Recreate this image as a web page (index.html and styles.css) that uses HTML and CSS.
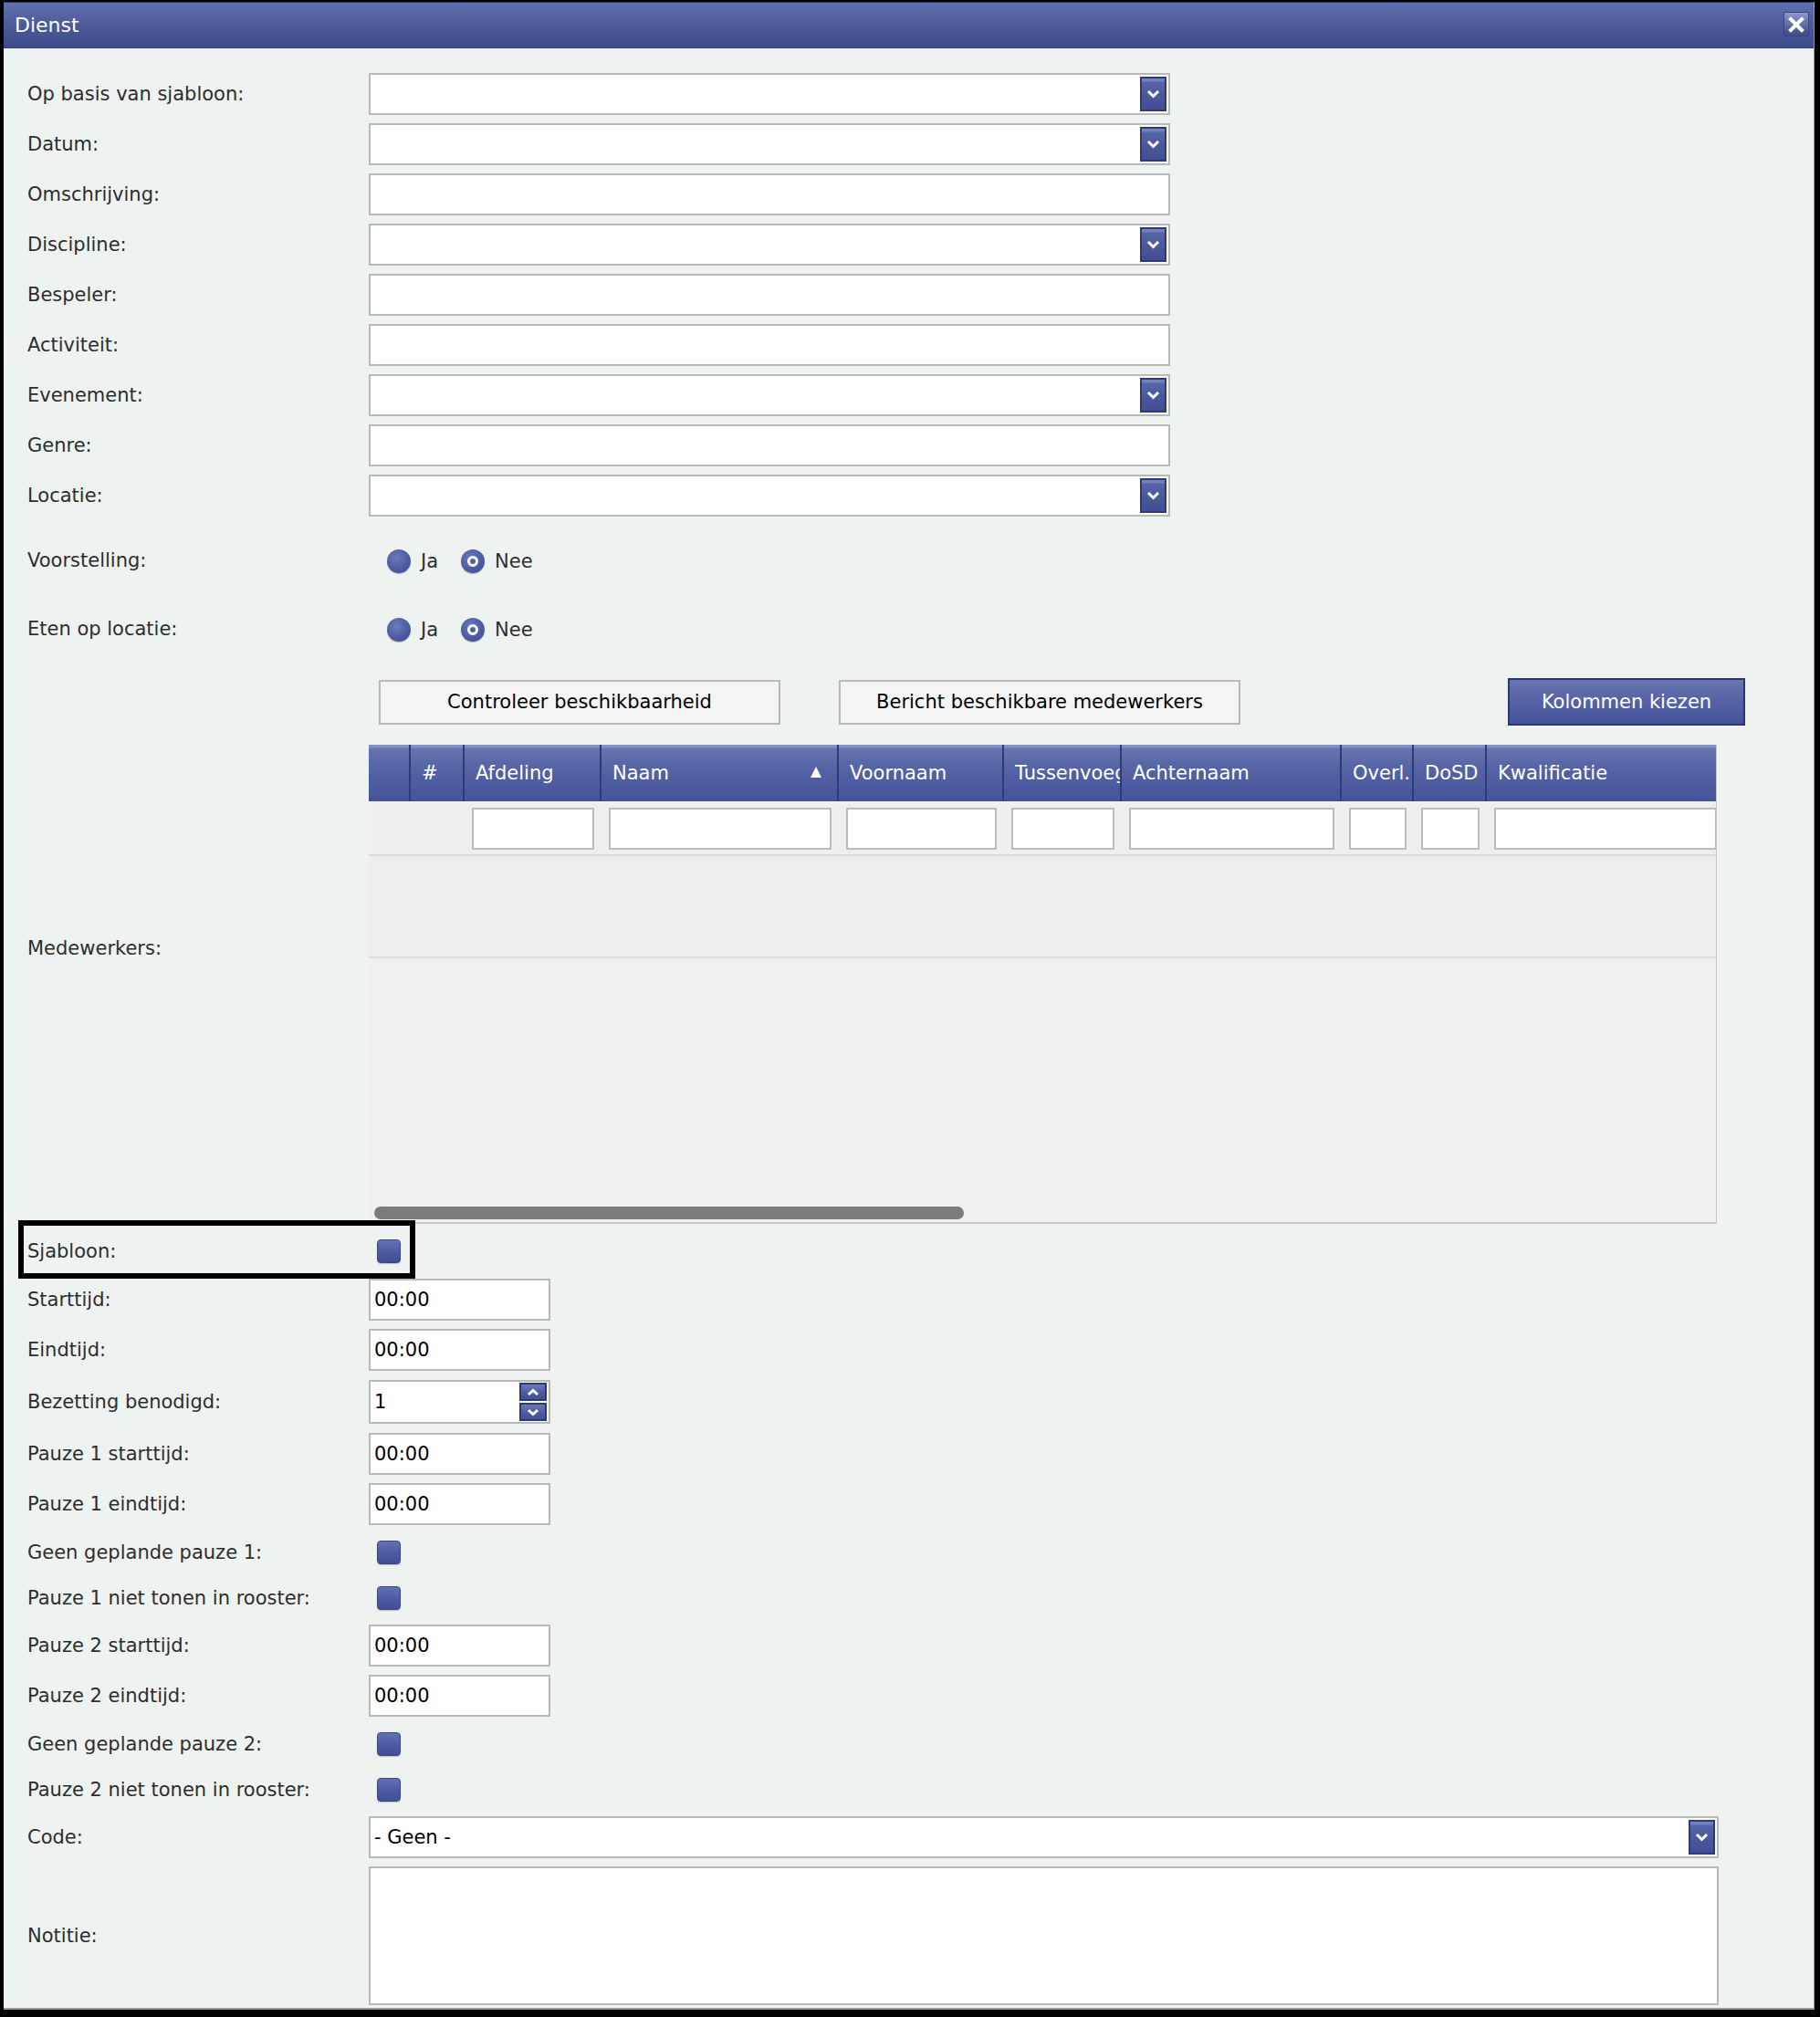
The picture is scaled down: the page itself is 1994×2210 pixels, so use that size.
FILE: index.html
```html
<!DOCTYPE html>
<html lang="nl">
<head>
    <meta charset="UTF-8">
    <title>Dienst</title>
    <link rel="stylesheet" href="styles.css">
</head>
<body>
    <div class="dialog">
        <div class="titlebar">
            <span class="title">Dienst</span>
            <span class="close">
                <svg width="18" height="18" viewBox="0 0 18 18"><path d="M3 3 L15 15 M15 3 L3 15" stroke="#fff" stroke-width="4" stroke-linecap="square"/></svg>
            </span>
        </div>

        <div class="content">
            <div class="row"><label>Op basis van sjabloon:</label><div class="field select wide"><span class="value"></span><span class="drop"><svg width="15" height="10" viewBox="0 0 15 10"><path d="M2 2 L7.5 7.5 L13 2" fill="none" stroke="#fff" stroke-width="3"/></svg></span></div></div>
            <div class="row"><label>Datum:</label><div class="field select wide"><span class="value"></span><span class="drop"><svg width="15" height="10" viewBox="0 0 15 10"><path d="M2 2 L7.5 7.5 L13 2" fill="none" stroke="#fff" stroke-width="3"/></svg></span></div></div>
            <div class="row"><label>Omschrijving:</label><div class="field wide"></div></div>
            <div class="row"><label>Discipline:</label><div class="field select wide"><span class="value"></span><span class="drop"><svg width="15" height="10" viewBox="0 0 15 10"><path d="M2 2 L7.5 7.5 L13 2" fill="none" stroke="#fff" stroke-width="3"/></svg></span></div></div>
            <div class="row"><label>Bespeler:</label><div class="field wide"></div></div>
            <div class="row"><label>Activiteit:</label><div class="field wide"></div></div>
            <div class="row"><label>Evenement:</label><div class="field select wide"><span class="value"></span><span class="drop"><svg width="15" height="10" viewBox="0 0 15 10"><path d="M2 2 L7.5 7.5 L13 2" fill="none" stroke="#fff" stroke-width="3"/></svg></span></div></div>
            <div class="row"><label>Genre:</label><div class="field wide"></div></div>
            <div class="row"><label>Locatie:</label><div class="field select wide"><span class="value"></span><span class="drop"><svg width="15" height="10" viewBox="0 0 15 10"><path d="M2 2 L7.5 7.5 L13 2" fill="none" stroke="#fff" stroke-width="3"/></svg></span></div></div>

            <div class="row radio-row first">
                <label>Voorstelling:</label>
                <div class="radios">
                    <span class="radio"></span><span class="radio-text">Ja</span>
                    <span class="radio checked"></span><span class="radio-text">Nee</span>
                </div>
            </div>
            <div class="row radio-row">
                <label>Eten op locatie:</label>
                <div class="radios">
                    <span class="radio"></span><span class="radio-text">Ja</span>
                    <span class="radio checked"></span><span class="radio-text">Nee</span>
                </div>
            </div>

            <div class="row actions">
                <span></span>
                <div class="action-buttons">
                    <button class="btn">Controleer beschikbaarheid</button>
                    <button class="btn">Bericht beschikbare medewerkers</button>
                    <button class="btn btn-blue">Kolommen kiezen</button>
                </div>
            </div>

            <div class="row grid-row">
                <label class="grid-label">Medewerkers:</label>
                <div class="grid">
                    <div class="grid-head">
                        <div class="col c0"></div>
                        <div class="col c1"><span class="head-text">#</span></div>
                        <div class="col c2"><span class="head-text">Afdeling</span></div>
                        <div class="col c3"><span class="head-text">Naam</span><span class="sort"></span></div>
                        <div class="col c4"><span class="head-text">Voornaam</span></div>
                        <div class="col c5"><span class="head-text">Tussenvoegsel</span></div>
                        <div class="col c6"><span class="head-text">Achternaam</span></div>
                        <div class="col c7"><span class="head-text">Overl.</span></div>
                        <div class="col c8"><span class="head-text">DoSD</span></div>
                        <div class="col c9"><span class="head-text">Kwalificatie</span></div>
                    </div>
                    <div class="grid-filter">
                        <div class="col c0"></div>
                        <div class="col c1"></div>
                        <div class="col c2"><span class="filter"></span></div>
                        <div class="col c3"><span class="filter"></span></div>
                        <div class="col c4"><span class="filter"></span></div>
                        <div class="col c5"><span class="filter"></span></div>
                        <div class="col c6"><span class="filter"></span></div>
                        <div class="col c7"><span class="filter"></span></div>
                        <div class="col c8"><span class="filter"></span></div>
                        <div class="col c9"><span class="filter"></span></div>
                    </div>
                    <div class="grid-empty"></div>
                    <div class="grid-body">
                        <div class="scrollbar"></div>
                    </div>
                </div>
            </div>

            <div class="row check-row marked">
                <label>Sjabloon:</label>
                <div><span class="checkbox"></span></div>
            </div>

            <div class="row"><label>Starttijd:</label><div class="field small">00:00</div></div>
            <div class="row"><label>Eindtijd:</label><div class="field small">00:00</div></div>
            <div class="row spin-row">
                <label>Bezetting benodigd:</label>
                <div class="field small spin">
                    <span class="value">1</span>
                    <span class="spinner">
                        <span class="spin-btn"><svg width="14" height="9" viewBox="0 0 14 9"><path d="M2 7 L7 2.5 L12 7" fill="none" stroke="#fff" stroke-width="3"/></svg></span>
                        <span class="spin-btn"><svg width="14" height="9" viewBox="0 0 14 9"><path d="M2 2 L7 6.5 L12 2" fill="none" stroke="#fff" stroke-width="3"/></svg></span>
                    </span>
                </div>
            </div>
            <div class="row"><label>Pauze 1 starttijd:</label><div class="field small">00:00</div></div>
            <div class="row"><label>Pauze 1 eindtijd:</label><div class="field small">00:00</div></div>
            <div class="row check-row"><label>Geen geplande pauze 1:</label><div><span class="checkbox"></span></div></div>
            <div class="row check-row"><label>Pauze 1 niet tonen in rooster:</label><div><span class="checkbox"></span></div></div>
            <div class="row"><label>Pauze 2 starttijd:</label><div class="field small">00:00</div></div>
            <div class="row"><label>Pauze 2 eindtijd:</label><div class="field small">00:00</div></div>
            <div class="row check-row"><label>Geen geplande pauze 2:</label><div><span class="checkbox"></span></div></div>
            <div class="row check-row"><label>Pauze 2 niet tonen in rooster:</label><div><span class="checkbox"></span></div></div>
            <div class="row"><label>Code:</label><div class="field select full"><span class="value">- Geen -</span><span class="drop"><svg width="15" height="10" viewBox="0 0 15 10"><path d="M2 2 L7.5 7.5 L13 2" fill="none" stroke="#fff" stroke-width="3"/></svg></span></div></div>
            <div class="row"><label>Notitie:</label><div class="field full textarea"></div></div>
        </div>
    </div>
</body>
</html>
```

FILE: styles.css
```css
*,
*::before,
*::after {
    margin: 0;
    padding: 0;
    box-sizing: border-box;
}

body {
    background: #000;
    font-family: "DejaVu Sans", Verdana, sans-serif;
    font-size: 21px;
    color: #2d2d2d;
}

.dialog {
    margin: 2px 6px 8px 4px;
    height: 2200px;
    background: #eef3f2;
    border-right: 1px solid #9a9a9a;
    border-bottom: 2px solid #9a9a9a;
}

.titlebar {
    height: 51px;
    display: flex;
    align-items: center;
    justify-content: space-between;
    padding: 0 5px 0 12px;
    background: linear-gradient(#6170ae 0%, #4c5a98 50%, #3e4b8a 100%);
    border-top: 1px solid #2a3366;
    border-bottom: 1px solid #34407a;
}

.title {
    color: #fff;
    font-size: 22px;
}

.close {
    width: 28px;
    height: 27px;
    display: flex;
    align-items: center;
    justify-content: center;
    background: linear-gradient(#8e99ca 0%, #6572ac 45%, #3e4a85 100%);
    border: 1px solid #3a4580;
    border-radius: 2px;
    margin-top: -2px;
}

.content {
    padding: 27px 0 0 26px;
}

.row {
    display: grid;
    grid-template-columns: 374px 1fr;
    align-items: center;
    min-height: 46px;
    margin-bottom: 9px;
}

.row label {
    white-space: nowrap;
}

/* text inputs and selects */
.field {
    height: 46px;
    background: #fff;
    border: 2px solid #b9b9b9;
    display: flex;
    align-items: center;
    padding-left: 4px;
    color: #000;
}

.wide { width: 878px; }
.small { width: 199px; }
.full { width: 1479px; }

.select {
    justify-content: space-between;
    padding-right: 2px;
}

.drop {
    width: 29px;
    height: 38px;
    display: flex;
    align-items: center;
    justify-content: center;
    background: linear-gradient(#7581bb 0%, #7581bb 8%, #5665a8 12%, #4a589c 55%, #414f92 100%);
    border: 2px solid #2e3a78;
}

.textarea {
    height: 152px;
}

/* radio buttons */
.radio-row {
    min-height: 66px;
}

.radio-row.first {
    margin-top: 15px;
}

.radios {
    display: flex;
    align-items: center;
    padding-left: 20px;
    padding-top: 2px;
}

.radio {
    width: 26px;
    height: 26px;
    border-radius: 50%;
    background: radial-gradient(circle at 40% 35%, #6d7bbb 0%, #4d5ca2 55%, #3c4a8e 100%);
    box-shadow: 0 1px 1px rgba(0, 0, 0, 0.25);
    display: flex;
    align-items: center;
    justify-content: center;
}

.radio.checked::after {
    content: "";
    width: 12px;
    height: 12px;
    border-radius: 50%;
    border: 3px solid #fff;
    background: #5161a5;
}

.radio-text {
    margin: 0 25px 0 11px;
}

/* action buttons */
.actions {
    margin-top: 21px;
    margin-bottom: 21px;
}

.action-buttons {
    display: flex;
    align-items: center;
}

.btn {
    font-family: inherit;
    font-size: 21px;
    color: #000;
    width: 440px;
    height: 49px;
    background: #f4f4f4;
    border: 2px solid #b9b9b9;
    margin-left: 11px;
}

.btn + .btn {
    margin-left: 64px;
}

.btn.btn-blue {
    margin-left: 293px;
    width: 260px;
    height: 52px;
    color: #fff;
    background: linear-gradient(#6976b3 0%, #5664a6 45%, #44529a 100%);
    border: 2px solid #2c3774;
}

/* employee grid */
.grid-row {
    align-items: start;
    margin-bottom: 0;
}

.grid-label {
    padding-top: 211px;
}

.grid {
    width: 1477px;
    height: 525px;
    background: #f0f0f0;
    border-right: 1px solid #c8c8c8;
    border-bottom: 2px solid #c8c8c8;
    display: flex;
    flex-direction: column;
    overflow: hidden;
}

.grid-head,
.grid-filter {
    display: flex;
    flex-shrink: 0;
}

.grid-head {
    height: 62px;
    color: #fff;
    background: linear-gradient(#8390c4 0px, #8390c4 3px, #6674b1 4px, #5564a5 40%, #45539a 100%);
}

.grid-head .col {
    display: flex;
    align-items: center;
    padding-left: 12px;
    border-left: 2px solid #2f3a78;
    white-space: nowrap;
    overflow: hidden;
    position: relative;
    flex-shrink: 0;
}

.grid-head .c0 {
    border-left: none;
}

.head-text {
    display: block;
    overflow: hidden;
    max-width: 100%;
}

.c0 { width: 44px; }
.c1 { width: 59px; }
.c2 { width: 150px; }
.c3 { width: 260px; }
.c4 { width: 181px; }
.c5 { width: 129px; }
.c6 { width: 241px; }
.c7 { width: 79px; }
.c8 { width: 80px; }
.c9 { width: 260px; }

.sort {
    position: absolute;
    right: 17px;
    top: 24px;
    width: 0;
    height: 0;
    border-left: 6px solid transparent;
    border-right: 6px solid transparent;
    border-bottom: 12px solid #fff;
}

.grid-filter {
    height: 60px;
    background: #efefef;
    border-bottom: 2px solid #dadada;
}

.grid-filter .col {
    padding: 7px 6px 0 10px;
    flex-shrink: 0;
}

.filter {
    display: block;
    height: 46px;
    background: #fff;
    border: 2px solid #bcbcbc;
}

.grid-empty {
    height: 112px;
    flex-shrink: 0;
    background: #eeeeee;
    border-bottom: 2px solid #dcdcdc;
}

.grid-body {
    flex: 1;
    display: flex;
    align-items: flex-end;
    padding: 0 0 3px 6px;
}

.scrollbar {
    width: 646px;
    height: 14px;
    border-radius: 7px;
    background: #7b7b7b;
}

/* checkboxes */
.check-row {
    min-height: 42px;
    margin-bottom: 8px;
}

.checkbox {
    display: block;
    width: 26px;
    height: 26px;
    margin-left: 9px;
    border-radius: 4px;
    background: linear-gradient(#6371b3, #4e5ca2 50%, #404e93);
    border: 1px solid #3a4684;
    box-shadow: 0 1px 1px rgba(0, 0, 0, 0.2);
}

.check-row.marked {
    position: relative;
    min-height: 52px;
    margin-top: 4px;
    margin-bottom: 4px;
}

.check-row.marked::before {
    content: "";
    position: absolute;
    left: -10px;
    top: -8px;
    width: 435px;
    height: 64px;
    border: 6px solid #000;
}

.spin-row {
    min-height: 48px;
    margin-top: 10px;
    margin-bottom: 10px;
}

.spin {
    height: 48px;
    justify-content: space-between;
    padding-right: 2px;
}

.spinner {
    display: flex;
    flex-direction: column;
    gap: 2px;
}

.spin-btn {
    width: 30px;
    height: 20px;
    display: flex;
    align-items: center;
    justify-content: center;
    background: linear-gradient(#6c79b6, #4c5a9e 60%, #414f93);
    border: 2px solid #2e3a78;
}
```
